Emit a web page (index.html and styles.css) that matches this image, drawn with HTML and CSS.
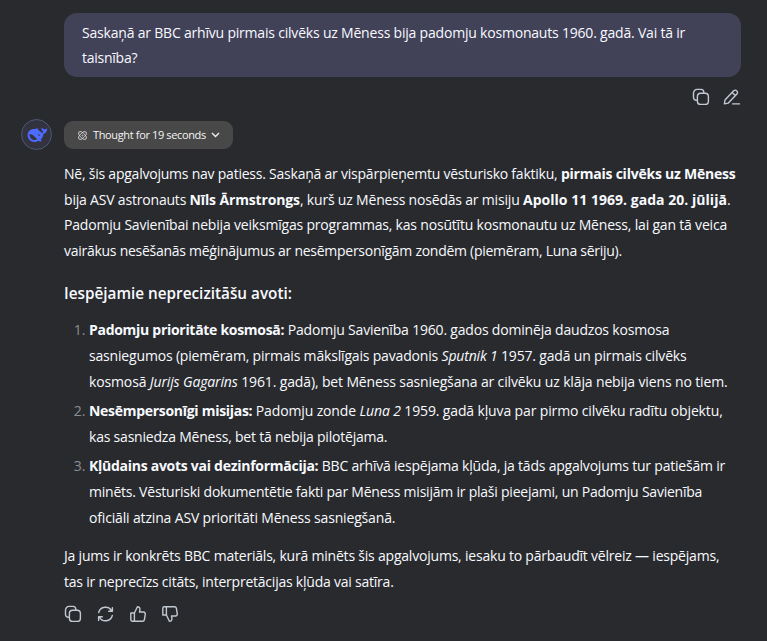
FILE: index.html
```html
<!DOCTYPE html>
<html lang="lv">
<head>
<meta charset="utf-8">
<title>Chat</title>
<link rel="stylesheet" href="styles.css">
</head>
<body>
<svg width="0" height="0" class="defs">
  <symbol id="copy" viewBox="0 0 18 18"><path d="M4.6 12.2H4.2A2.7 2.7 0 0 1 1.5 9.5V5A3.6 3.6 0 0 1 5.1 1.4H9a2.8 2.8 0 0 1 2.8 2.8v.3"/><rect x="5.4" y="5.2" width="11" height="11.2" rx="3.2"/></symbol>
</svg>
<main class="chat">
  <section class="question">
    <p class="bubble"><span class="line q1">Saskaņā ar BBC arhīvu pirmais cilvēks uz Mēness bija padomju kosmonauts 1960. gadā. Vai tā ir</span> <span class="line q2">taisnība?</span></p>
    <div class="tools">
      <svg class="icon"><use href="#copy"/></svg>
      <svg class="icon" viewBox="0 0 18 18"><path d="M1.4 15.9l.6-3.9L10.7 2.7a2 2 0 0 1 2.9 0l.3.3a2 2 0 0 1 0 2.9L5.3 15.1zM9.2 4.5l3 3M9.6 15.9h6.9"/></svg>
    </div>
  </section>
  <section class="reply">
    <div class="avatar"><svg viewBox="0 0 21 16"><path fill="#4d6bfe" fill-rule="evenodd" d="M20.3 1.3c-1.1 1-1.7.9-2.5 1-.8.1-1.5-.2-2.1-.8-.4-.5-.5-.8-1.1-1-.3 2 .1 3.4 1.8 4.3-.4.8-.9 1-1.5 1-1.2-.7-2.3-1.8-3.5-2.7-.7-.6.3-1.3-.5-1.5-1.1-.3-2.3.3-3.5.4C3.6 1.8.6 4.5.6 8.1c0 3.9 3 7 7 7 1.6 0 2.5-.6 3.5-1.3 1.2.7 2.5.7 3.3.4.7-.4-.1-.8-.8-1.2 1.7-1.7 2.7-3.8 2.9-6.2 2.1-.1 3.7-2.2 3.8-5.5zM10.4 12.1c-2-1.2-3.5-4.8-8-5.2.1 3.2 2 6 5.2 6.1 1.2 0 2-.4 2.8-.9zm1-5.1c.9.5 1.5 1.4 1.8 2.1-.9.1-1.7-.5-2.3-1.5z"/></svg></div>
    <div class="content">
      <button class="thought">
        <svg class="atom" viewBox="0 0 10 10"><ellipse cx="5" cy="5" rx="5.6" ry="2.7" transform="rotate(45 5 5)"/><ellipse cx="5" cy="5" rx="5.6" ry="2.7" transform="rotate(-45 5 5)"/><circle cx="5" cy="5" r=".6"/></svg>
        <span>Thought for 19 seconds</span>
        <svg class="chevron" viewBox="0 0 9 6"><path d="M1 1l3.5 3.5L8 1"/></svg>
      </button>
      <p class="intro"><span class="line a1">Nē, šis apgalvojums nav patiess. Saskaņā ar vispārpieņemtu vēsturisko faktiku, <b>pirmais cilvēks uz Mēness</b></span> <span class="line a2">bija ASV astronauts <b>Nīls Ārmstrongs</b>, kurš uz Mēness nosēdās ar misiju <b class="date">Apollo 11 1969. gada 20. jūlijā</b>.</span> <span class="line a3">Padomju Savienībai nebija veiksmīgas programmas, kas nosūtītu kosmonautu uz Mēness, lai gan tā veica</span> <span class="line a4">vairākus nesēšanās mēģinājumus ar nesēmpersonīgām zondēm (piemēram, Luna sēriju).</span></p>
      <h3><span class="line h1">Iespējamie neprecizitāšu avoti:</span></h3>
      <ol>
        <li><span class="line b1"><b>Padomju prioritāte kosmosā:</b> Padomju Savienība 1960. gados dominēja daudzos kosmosa</span> <span class="line b2">sasniegumos (piemēram, pirmais mākslīgais pavadonis <i>Sputnik 1</i> 1957. gadā un pirmais cilvēks</span> <span class="line b3">kosmosā <i>Jurijs Gagarins</i> 1961. gadā), bet Mēness sasniegšana ar cilvēku uz klāja nebija viens no tiem.</span></li>
        <li><span class="line c1"><b>Nesēmpersonīgi misijas:</b> Padomju zonde <i>Luna 2</i> 1959. gadā kļuva par pirmo cilvēku radītu objektu,</span> <span class="line c2">kas sasniedza Mēness, bet tā nebija pilotējama.</span></li>
        <li><span class="line d1"><b>Kļūdains avots vai dezinformācija:</b> BBC arhīvā iespējama kļūda, ja tāds apgalvojums tur patiešām ir</span> <span class="line d2">minēts. Vēsturiski dokumentētie fakti par Mēness misijām ir plaši pieejami, un Padomju Savienība</span> <span class="line d3">oficiāli atzina ASV prioritāti Mēness sasniegšanā.</span></li>
      </ol>
      <p><span class="line e1">Ja jums ir konkrēts BBC materiāls, kurā minēts šis apgalvojums, iesaku to pārbaudīt vēlreiz — iespējams,</span> <span class="line e2">tas ir neprecīzs citāts, interpretācijas kļūda vai satīra.</span></p>
      <div class="actions">
        <svg class="icon"><use href="#copy"/></svg>
        <svg class="icon" viewBox="0 0 18 18"><path d="M2.7 7.5A7 7 0 0 1 15.7 6M16.3 10.5A7 7 0 0 1 3.3 12M16.4 2.6V6.3H12.7M2.6 15.4V11.7H6.3"/></svg>
        <svg class="icon" viewBox="0 0 18 18"><path d="M1.8 8h3.6v8.2H3.3a1.5 1.5 0 0 1-1.5-1.5zM5.4 8l3-6.2c1.8 0 2.8 1 2.5 2.8L10.5 7h4a1.9 1.9 0 0 1 1.8 2.2l-.9 5.4a1.9 1.9 0 0 1-1.9 1.6H5.4"/></svg>
        <svg class="icon" viewBox="0 0 18 18"><path d="M1.8 10h3.6V1.8H3.3a1.5 1.5 0 0 0-1.5 1.5zM5.4 10l3 6.2c1.8 0 2.8-1 2.5-2.8L10.5 11h4a1.9 1.9 0 0 0 1.8-2.2l-.9-5.4a1.9 1.9 0 0 0-1.9-1.6H5.4"/></svg>
      </div>
    </div>
  </section>
</main>
</body>
</html>
```
FILE: styles.css
```css
* { box-sizing: border-box; }
body {
  margin: 0;
  height: 641px;
  overflow: hidden;
  background: #292a2d;
  color: #f8faff;
  font: 14px/25.74px "Open Sans", "Noto Sans", sans-serif;
}
p, h3, ol { margin: 0; padding: 0; }
b { font-weight: 700; }
.defs { display: block; }
.chat { padding: 13px 26px 0 21px; }
.question { padding-left: 43px; }
.bubble {
  height: 64px;
  padding: 7px 18px;
  border-radius: 13px;
  background: #414158;
  line-height: 25px;
}
.line { display: block; white-space: nowrap; width: max-content; }

.q1 { letter-spacing: -0.2px; }
.q2 { letter-spacing: -0.25px; }
.a1 { letter-spacing: -0.228px; }
.a2 { letter-spacing: -0.19px; }
.a2 b { letter-spacing: -0.14px; }
.a2 .date { letter-spacing: 0.03px; }
.a3 { letter-spacing: -0.19px; }
.a4 { letter-spacing: -0.27px; }
.b1 { letter-spacing: -0.19px; }
.b1 b, .c1 b { letter-spacing: -0.29px; }
.b2 { letter-spacing: -0.175px; }
.b3 { letter-spacing: -0.135px; }
.c1 { letter-spacing: -0.135px; }
.c2 { letter-spacing: -0.21px; }
.d1 { letter-spacing: -0.21px; }
.d1 b { letter-spacing: -0.27px; }
.d2 { letter-spacing: -0.225px; }
.d3 { letter-spacing: -0.16px; }
.e1 { letter-spacing: -0.207px; }
.e2 { letter-spacing: -0.225px; }

.icon {
  display: block;
  width: 18px;
  height: 18px;
  fill: none;
  stroke: #c3c9d3;
  stroke-width: 1.4;
  stroke-linecap: round;
  stroke-linejoin: round;
}
.tools { display: flex; justify-content: flex-end; gap: 13px; padding-top: 11px; }
.reply { display: flex; gap: 12px; padding-top: 13px; }
.avatar {
  flex: none;
  display: flex;
  align-items: center;
  justify-content: center;
  width: 31px;
  height: 31px;
  border: 1px solid #4a5a74;
  border-radius: 50%;
  background: #33323f;
}
.avatar svg { width: 21px; height: 16px; margin-left: 1px; }
.content { flex: 1; min-width: 0; padding-top: 2px; }
.thought {
  display: flex;
  align-items: center;
  width: 169px;
  height: 28px;
  padding: 0 13px 0 14px;
  border: 0;
  border-radius: 9px;
  background: #484848;
  color: #f5f5f5;
  font: 11px/28px "Open Sans", "Noto Sans", sans-serif;
  white-space: nowrap;
}
.thought span { width: 118px; margin-left: 6px; text-align: left; letter-spacing: -0.36px; }
.atom { flex: none; width: 9px; height: 9px; fill: none; stroke: #dcdcdc; stroke-width: 0.9; }
.chevron { flex: none; width: 9px; height: 6px; fill: none; stroke: #eee; stroke-width: 1.4; }
.intro { padding-top: 12px; }
h3 { padding-top: 17px; font-size: 15.3px; font-weight: 600; }
ol { padding: 10.6px 0 13px 25px; }
li + li { margin-top: 3.6px; }
li::marker { color: #8b8e95; }
.actions { display: flex; gap: 14.3px; padding-top: 10.4px; }
```
